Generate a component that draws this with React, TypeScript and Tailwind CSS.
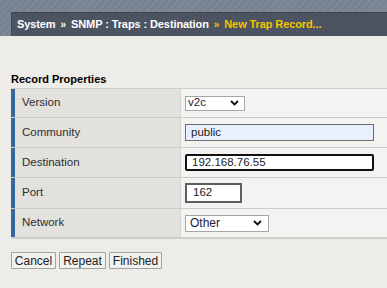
import React from "react";

const Chevron = () => (
  <svg width="9" height="6" viewBox="0 0 9 6" className="shrink-0">
    <path d="M1 1 L4.5 4.5 L8 1" fill="none" stroke="#111" strokeWidth="1.8" />
  </svg>
);

type Row = { label: string; h: string; content: React.ReactNode };

export default function App() {
  const rows: Row[] = [
    {
      label: "Version",
      h: "h-[28px]",
      content: (
        <div className="flex h-[15px] w-[60px] items-center justify-between border border-[#a6a6a6] bg-white pl-[2px] pr-[5px] text-[11.5px] text-[#1c2040]">
          <span>v2c</span>
          <Chevron />
        </div>
      ),
    },
    {
      label: "Community",
      h: "h-[30px]",
      content: (
        <div className="flex h-[17px] w-[189px] items-center border-[1.5px] border-[#6e6e6e] bg-[#e8f0fe] pl-[5px] text-[11.5px] text-[#222]">
          public
        </div>
      ),
    },
    {
      label: "Destination",
      h: "h-[30px]",
      content: (
        <div className="flex h-[17px] w-[189px] items-center rounded-[2px] border-2 border-[#111] bg-white pl-[5px] text-[11.5px] text-[#222]">
          192.168.76.55
        </div>
      ),
    },
    {
      label: "Port",
      h: "h-[31px]",
      content: (
        <div className="flex h-[20px] w-[57px] items-center border-2 border-[#5e5e5e] bg-white pl-[6px] text-[11.5px] text-[#222]">
          162
        </div>
      ),
    },
    {
      label: "Network",
      h: "h-[29px]",
      content: (
        <div className="flex h-[17px] w-[84px] items-center justify-between border border-[#a6a6a6] bg-white pl-[4px] pr-[6px] text-[12px] text-[#1c2040]">
          <span>Other</span>
          <Chevron />
        </div>
      ),
    },
  ];

  return (
    <div
      className="h-[288px] w-[387px] overflow-hidden bg-[#edece8]"
      style={{ fontFamily: '"Liberation Sans", Arial, sans-serif' }}
    >
      <div className="h-[36px] bg-[repeating-linear-gradient(135deg,#7c8896_0px,#7c8896_3px,#75818f_3px,#75818f_5px)] pl-[11px] pt-[12px]">
        <div className="flex h-[24px] items-center border-l border-t border-[#3d4550] bg-[#4c5462] pl-[5px] text-[11px] font-bold tracking-[-0.1px] text-white">
          <span>System</span>
          <span className="px-[5px] text-[10px]">»</span>
          <span>SNMP : Traps : Destination</span>
          <span className="px-[5px] text-[10px] text-[#f5c400]">»</span>
          <span className="text-[#f5c400]">New Trap Record...</span>
        </div>
      </div>

      <div className="pl-[11px] pt-[36px] text-[11px] font-bold leading-[14px] text-black">
        Record Properties
      </div>

      <div className="ml-[11px] mt-[2px] border-t border-b-2 border-[#cfcecb]">
        {rows.map((r, i) => (
          <div
            key={r.label}
            className={`flex ${r.h} ${i > 0 ? "border-t border-[#cbcac6]" : ""}`}
          >
            <div className="w-[4px] bg-[#34689c]" />
            <div className="flex w-[165px] items-center bg-[#e2e1dd] pl-[7px] text-[11.5px] text-[#2e2e2e]">
              {r.label}
            </div>
            <div className="flex flex-1 items-center border-l border-[#d3d2ce] bg-[#f4f3f1] pl-[4px]">
              {r.content}
            </div>
          </div>
        ))}
      </div>

      <div className="ml-[11px] mt-[13px] flex gap-[3px] text-[12px] text-[#222]">
        {[
          ["Cancel", "w-[45px]"],
          ["Repeat", "w-[47px]"],
          ["Finished", "w-[53px]"],
        ].map(([b, w]) => (
          <div
            key={b}
            className={`flex h-[17px] ${w} items-center justify-center rounded-[1px] border border-[#a2a2a2] bg-[#f1f1f0]`}
          >
            {b}
          </div>
        ))}
      </div>
    </div>
  );
}
